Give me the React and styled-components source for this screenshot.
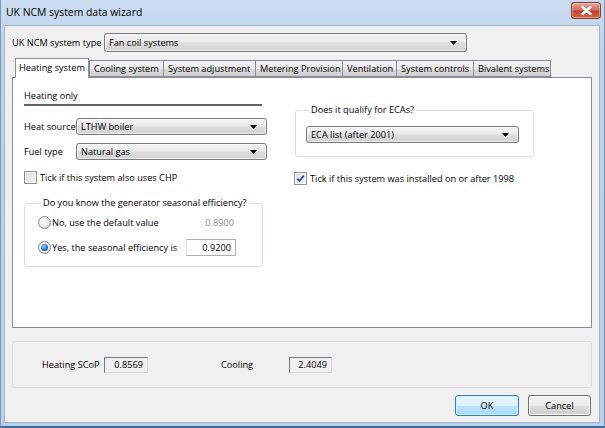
import React from 'react';
import styled, { createGlobalStyle } from 'styled-components';

const GlobalStyle = createGlobalStyle`
  html, body {
    margin: 0;
    padding: 0;
    background: #f0f0f0;
  }
  body {
    font-family: "Open Sans", "Liberation Sans", sans-serif;
    font-size: 9.2px;
    color: #000;
  }
  * {
    box-sizing: border-box;
  }
`;

const Window = styled.div`
  width: 605px;
  height: 428px;
  display: flex;
  flex-direction: column;
  background: linear-gradient(180deg, #cadcf0 0%, #bcd3eb 60px, #b9d1ea 100%);
  border-left: 1px solid #7c95b0;
  border-right: 1px solid #7c95b0;
  border-bottom: 2px solid #3b6a9b;
`;

const TitleBar = styled.div`
  height: 25px;
  flex-shrink: 0;
  display: flex;
  align-items: flex-start;
  justify-content: space-between;
  padding-left: 5px;
`;

const Title = styled.span`
  font-size: 10.4px;
  line-height: 24px;
`;

const CloseButton = styled.div`
  width: 30px;
  height: 17px;
  margin: 2px 3px 0 0;
  border: 1px solid #873b35;
  border-radius: 3px;
  background: linear-gradient(180deg, #e8a493 0%, #d46e5b 45%, #c2412d 55%, #d2674c 100%);
  display: flex;
  align-items: center;
  justify-content: center;
  box-shadow: inset 0 0 0 1px rgba(255, 255, 255, 0.35);
`;

const Client = styled.div`
  flex: 1;
  margin: 0 4px 3px 3px;
  background: #f0f0f0;
  border: 1px solid #a3b4c6;
  padding: 7px 7px 0 7px;
  display: flex;
  flex-direction: column;
`;

const Row = styled.div`
  display: flex;
  align-items: center;
  margin-top: ${p => p.top || 0}px;
`;

const Label = styled.span`
  width: ${p => (p.width ? `${p.width}px` : 'auto')};
  flex-shrink: 0;
  white-space: nowrap;
  color: ${p => (p.muted ? '#8d8d8d' : '#000')};
`;

const ComboBox = styled.div`
  width: ${p => p.width}px;
  height: ${p => p.height || 17}px;
  border: 1px solid #7a7a7a;
  border-radius: 3px;
  background: linear-gradient(180deg, #f3f3f3 0%, #ebebeb 48%, #dddddd 52%, #d3d3d3 100%);
  display: flex;
  align-items: center;
  justify-content: space-between;
  padding: 0 9px 0 4px;
  box-shadow: inset 0 0 0 1px rgba(255, 255, 255, 0.6);
`;

const Arrow = () => (
  <svg width="7" height="4" viewBox="0 0 7 4">
    <path d="M0 0 H7 L3.5 4 Z" fill="#000" />
  </svg>
);

const TabStrip = styled.div`
  display: flex;
  align-items: flex-end;
  height: 20px;
  margin-top: 6px;
  padding-left: 3px;
  position: relative;
  z-index: 1;
  margin-bottom: -1px;
`;

const Tab = styled.div`
  height: ${p => (p.active ? 20 : 17)}px;
  width: ${p => p.width}px;
  margin-bottom: ${p => (p.active ? 0 : 1)}px;
  border: 1px solid #898c95;
  border-right-width: ${p => (p.active ? 1 : 0)}px;
  border-bottom: ${p => (p.active ? 'none' : '1px solid #898c95')};
  background: ${p =>
    p.active ? '#fff' : 'linear-gradient(180deg, #f2f2f2 0%, #ebebeb 50%, #dddddd 51%, #cfcfcf 100%)'};
  display: flex;
  align-items: ${p => (p.active ? 'flex-start' : 'center')};
  padding: ${p => (p.active ? '2px 0 0 3px' : '0 0 0 4px')};
  white-space: nowrap;
  &:last-child {
    border-right-width: 1px;
  }
`;

const TabPanel = styled.div`
  height: 251px;
  background: #fff;
  border: 1px solid #898c95;
  padding: 12px 11px;
  display: grid;
  grid-template-columns: 243px 240px;
  column-gap: 27px;
  align-items: start;
`;

const Column = styled.div`
  display: flex;
  flex-direction: column;
`;

const SectionTitle = styled.div`
  width: 238px;
  line-height: 12px;
  padding-bottom: 2px;
  border-bottom: 2px solid #646464;
`;

const GroupBox = styled.fieldset`
  margin: ${p => p.top || 0}px 0 0 ${p => p.left || 0}px;
  width: ${p => p.width}px;
  height: ${p => p.height}px;
  border: 1px solid #d5dfe5;
  border-radius: 3px;
  padding: ${p => p.pad || '0'};
  min-width: 0;
`;

const Legend = styled.legend`
  padding: 0 2px;
  margin-left: 3px;
  line-height: 12px;
`;

const CheckRow = styled.label`
  display: flex;
  align-items: center;
  gap: 3px;
  margin-top: ${p => p.top || 0}px;
  white-space: nowrap;
`;

const CheckBox = styled.span`
  width: 13px;
  height: 13px;
  flex-shrink: 0;
  border: 1px solid #8f8f8f;
  background: linear-gradient(135deg, #dcdcdc 0%, #f4f4f4 100%);
  box-shadow: inset 0 0 0 1px #f6f6f6;
  display: flex;
  align-items: center;
  justify-content: center;
`;

const Tick = () => (
  <svg width="9" height="9" viewBox="0 0 9 9">
    <path d="M1.3 4.8 L3.5 7 L7.8 1.6" fill="none" stroke="#2a4f8f" strokeWidth="1.8" />
  </svg>
);

const RadioRow = styled.div`
  display: flex;
  align-items: center;
  height: ${p => p.height}px;
  margin-top: ${p => p.top || 0}px;
`;

const Radio = styled.span`
  width: 13px;
  height: 13px;
  border-radius: 50%;
  flex-shrink: 0;
  margin-right: 1px;
  border: 1px solid #8a8a8a;
  background: radial-gradient(circle at 40% 35%, #ffffff 0%, #e6e6e6 60%, #cfcfcf 100%);
  display: flex;
  align-items: center;
  justify-content: center;
  &::after {
    content: '';
    display: ${p => (p.checked ? 'block' : 'none')};
    width: 7px;
    height: 7px;
    border-radius: 50%;
    background: radial-gradient(circle at 40% 35%, #8fd3ff 0%, #1e76c8 55%, #0d3f7f 100%);
  }
`;

const ValueText = styled.span`
  width: ${p => p.width}px;
  text-align: right;
  color: #8d8d8d;
`;

const TextBox = styled.div`
  width: ${p => p.width}px;
  height: ${p => p.height || 18}px;
  margin-left: ${p => p.left || 0}px;
  border: 1px solid ${p => (p.readOnly ? '#d6d6d6' : '#abadb3')};
  border-top-color: ${p => (p.readOnly ? '#7a7a7a' : '#abadb3')};
  border-left-color: ${p => (p.readOnly ? '#7a7a7a' : '#dbdfe6')};
  background: ${p => (p.readOnly ? '#f0f0f0' : '#fff')};
  display: flex;
  align-items: center;
  justify-content: flex-end;
  padding-right: 4px;
`;

const ResultsGroup = styled.div`
  height: 47px;
  margin-top: 13px;
  border: 1px solid #dcdcdc;
  border-radius: 3px;
  display: flex;
  align-items: center;
  padding-left: 29px;
`;

const ResultItem = styled.div`
  display: flex;
  align-items: center;
  margin-right: ${p => p.gap || 0}px;
`;

const ButtonRow = styled.div`
  display: flex;
  justify-content: flex-end;
  gap: 9px;
  margin-top: 7px;
  padding-right: 1px;
`;

const Button = styled.button`
  width: ${p => p.width}px;
  height: 21px;
  font: inherit;
  color: #000;
  border-radius: 3px;
  border: 1px solid ${p => (p.primary ? '#3c7fb1' : '#707070')};
  background: ${p =>
    p.primary
      ? 'linear-gradient(180deg, #eaf6fd 0%, #d9f0fc 50%, #bee6fd 51%, #a7d9f5 100%)'
      : 'linear-gradient(180deg, #f2f2f2 0%, #ebebeb 50%, #dddddd 51%, #cfcfcf 100%)'};
  box-shadow: inset 0 0 0 1px ${p => (p.primary ? '#cdf0fe' : '#fcfcfc')};
  padding: 0;
`;

const tabs = [
  { label: 'Heating system', width: 74 },
  { label: 'Cooling system', width: 74 },
  { label: 'System adjustment', width: 92 },
  { label: 'Metering Provision', width: 87 },
  { label: 'Ventilation', width: 54 },
  { label: 'System controls', width: 77 },
  { label: 'Bivalent systems', width: 78 },
];

const App = () => (
  <>
    <GlobalStyle />
    <Window>
      <TitleBar>
        <Title>UK NCM system data wizard</Title>
        <CloseButton>
          <svg width="11" height="9" viewBox="0 0 11 9">
            <path d="M1.5 1 L9.5 8 M9.5 1 L1.5 8" stroke="#fff" strokeWidth="2.4" strokeLinecap="round" />
          </svg>
        </CloseButton>
      </TitleBar>

      <Client>
        <Row>
          <Label width={92}>UK NCM system type</Label>
          <ComboBox width={363} height={19}>
            <span>Fan coil systems</span>
            <Arrow />
          </ComboBox>
        </Row>

        <TabStrip>
          {tabs.map((t, i) => (
            <Tab key={t.label} active={i === 0} width={t.width}>
              {t.label}
            </Tab>
          ))}
        </TabStrip>

        <TabPanel>
          <Column>
            <SectionTitle>Heating only</SectionTitle>

            <Row top={12}>
              <Label width={52}>Heat source</Label>
              <ComboBox width={191}>
                <span>LTHW boiler</span>
                <Arrow />
              </ComboBox>
            </Row>
            <Row top={8}>
              <Label width={52}>Fuel type</Label>
              <ComboBox width={191}>
                <span>Natural gas</span>
                <Arrow />
              </ComboBox>
            </Row>

            <CheckRow top={11}>
              <CheckBox />
              Tick if this system also uses CHP
            </CheckRow>

            <GroupBox top={13} width={239} height={70} pad="5px 0 0 13px">
              <Legend>Do you know the generator seasonal efficiency?</Legend>
              <RadioRow height={17}>
                <Radio />
                <Label width={137}>No, use the default value</Label>
                <ValueText width={45}>0.8900</ValueText>
              </RadioRow>
              <RadioRow height={18} top={7}>
                <Radio checked />
                <Label width={134}>Yes, the seasonal efficiency is</Label>
                <TextBox width={50} height={17}>0.9200</TextBox>
              </RadioRow>
            </GroupBox>
          </Column>

          <Column>
            <GroupBox top={14} left={1} width={239} height={53} pad="10px 0 0 10px">
              <Legend>Does it qualify for ECAs?</Legend>
              <ComboBox width={213}>
                <span>ECA list (after 2001)</span>
                <Arrow />
              </ComboBox>
            </GroupBox>

            <CheckRow top={15}>
              <CheckBox>
                <Tick />
              </CheckBox>
              Tick if this system was installed on or after 1998
            </CheckRow>
          </Column>
        </TabPanel>

        <ResultsGroup>
          <ResultItem gap={73}>
            <Label width={62}>Heating SCoP</Label>
            <TextBox width={44} height={16} readOnly>
              0.8569
            </TextBox>
          </ResultItem>
          <ResultItem>
            <Label width={68}>Cooling</Label>
            <TextBox width={43} height={16} readOnly>
              2.4049
            </TextBox>
          </ResultItem>
        </ResultsGroup>

        <ButtonRow>
          <Button primary width={64}>
            OK
          </Button>
          <Button width={63}>Cancel</Button>
        </ButtonRow>
      </Client>
    </Window>
  </>
);

export default App;
